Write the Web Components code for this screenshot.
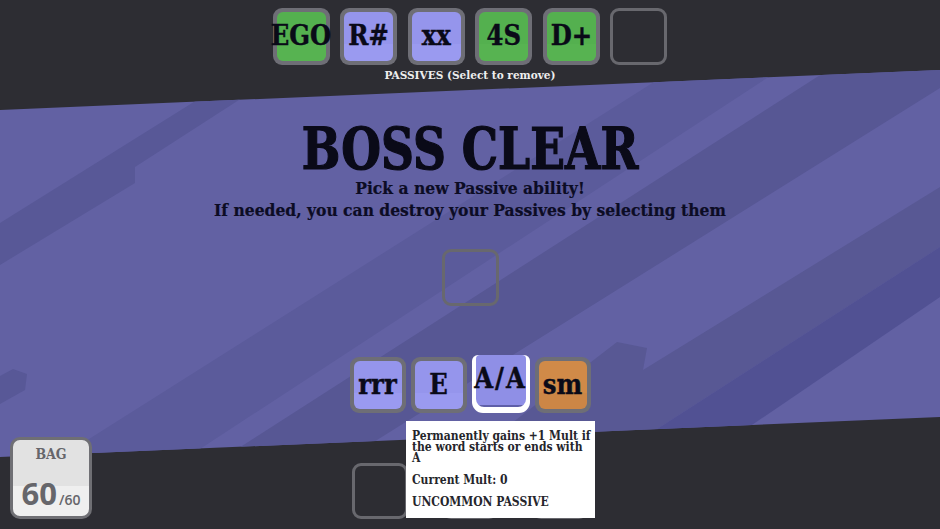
<!DOCTYPE html>
<html>
<head>
<meta charset="utf-8">
<style>
html,body{margin:0;padding:0;background:#2d2d33;overflow:hidden}
</style>
</head>
<body>
<boss-screen></boss-screen>
<script>
const tileTemplate=document.createElement('template');
tileTemplate.innerHTML=`
<style>
:host{
  display:block;width:var(--tile,57px);height:var(--tile,57px);box-sizing:border-box;border-radius:9px;
  background:var(--edge,#6e6e76);padding:4px;
  font:700 27px/1 "DejaVu Serif Condensed","DejaVu Serif",serif;color:#0a0a18;
  -webkit-text-stroke:.4px currentColor;
}
.face{
  height:100%;border-radius:6px;display:flex;align-items:center;justify-content:center;
  box-sizing:border-box;padding-bottom:2px;white-space:nowrap;
  background:linear-gradient(var(--top,#9595ec) 66%,var(--bottom,#9a9af0) 66%);
}
:host([kind=green]){--top:#54b04f;--bottom:#57b351}
:host([kind=orange]){--top:#d08a48;--bottom:#cc8646}
:host([kind=empty]){background:transparent;border:3px solid #68686e;padding:0}
:host([kind=empty]) .face{background:none}
:host([picked]){
  width:58px;height:58px;margin-top:-2px;background:#fff;padding:0 4px 6px;
  border-radius:6px 6px 11px 11px;letter-spacing:2px;
}
:host([picked]) .face{
  padding:0 0 6px;background:linear-gradient(#8f8fe6 96%,#5f5fa8 96%);border-radius:4px 4px 8px 8px;
}
</style>
<div class="face"><slot></slot></div>`;
class GameTile extends HTMLElement{
  constructor(){
    super();
    this.attachShadow({mode:'open'}).appendChild(tileTemplate.content.cloneNode(true));
  }
}
customElements.define('game-tile',GameTile);

const tipTemplate=document.createElement('template');
tipTemplate.innerHTML=`
<style>
:host{
  position:absolute;left:406px;top:421px;width:189px;height:97px;box-sizing:border-box;
  background:#fff;color:#25252b;padding:10px 3px 0 6px;
  font:700 12px/11px "DejaVu Serif Condensed","DejaVu Serif",serif;
}
p{margin:0 0 11px}
</style>
<p>Permanently gains +1 Mult if the word starts or ends with A</p>
<p>Current Mult: 0</p>
<p>UNCOMMON PASSIVE</p>`;
class TipBox extends HTMLElement{
  constructor(){
    super();
    this.attachShadow({mode:'open'}).appendChild(tipTemplate.content.cloneNode(true));
  }
}
customElements.define('tip-box',TipBox);

const bagTemplate=document.createElement('template');
bagTemplate.innerHTML=`
<style>
:host{
  position:absolute;left:10px;top:437px;width:82px;height:82px;box-sizing:border-box;
  border:3px solid #6f6f74;border-radius:10px;
  background:linear-gradient(#e2e2e2 60%,#efefef 60%);color:#66666b;
  font-family:"Open Sans","Noto Sans",sans-serif;font-weight:700;text-align:center;
}
.name{font:700 14px/1 "DejaVu Serif Condensed","DejaVu Serif",serif;margin-top:7px}
.count{font-size:31px;line-height:1;margin-top:17px;white-space:nowrap}
small{font-size:14px;font-weight:600;margin-left:2px}
</style>
<div class="name">BAG</div>
<div class="count">60<small>/60</small></div>`;
class BagCounter extends HTMLElement{
  constructor(){
    super();
    this.attachShadow({mode:'open'}).appendChild(bagTemplate.content.cloneNode(true));
  }
}
customElements.define('bag-counter',BagCounter);

const screenTemplate=document.createElement('template');
screenTemplate.innerHTML=`
<style>
:host{
  display:flex;flex-direction:column;align-items:center;position:relative;
  width:940px;height:529px;overflow:hidden;background:#2d2d33;
  font-family:"DejaVu Serif Condensed","DejaVu Serif",serif;font-weight:700;color:#0c0c24;
}
svg.bg{position:absolute;left:0;top:0}
.row{display:flex;position:relative}
.passives{gap:10.6px;margin-top:8px}
.label{position:relative;color:#eee;font-size:11.7px;line-height:14px;margin-top:3px}
h1{
  position:relative;margin:41px 0 0;font-size:57px;line-height:52px;color:#0a0a18;font-weight:700;
  white-space:nowrap;transform:scaleX(.89);-webkit-text-stroke:1.2px currentColor;
}
.sub{position:relative;text-align:center;font-size:17.3px;line-height:22px;margin-top:2px;-webkit-text-stroke:.2px currentColor}
.pick{position:relative;margin-top:28px}
.choices{gap:5px;margin-top:51px;--tile:56px}
.slots{gap:34px;margin-top:50px;--tile:56px}
</style>
<svg class="bg" width="940" height="529" viewBox="0 0 940 529">
  <defs><clipPath id="band"><polygon points="0,110 940,70 940,417 0,457"/></clipPath></defs>
  <polygon points="0,110 940,70 940,417 0,457" fill="#6261a3"/>
  <g clip-path="url(#band)">
    <polygon points="197,100 242,98 135,167 135,183 0,265 0,223" fill="#585897"/>
    <polygon points="0,376 13,369 27,374 25,390 0,404" fill="#585897"/>
    <polygon points="654,82 773,74 200,449 200,470 40,470" fill="#5b5b9b"/>
    <polygon points="817,77 830,70 940,60 940,88 377,440 360,460 220,460" fill="#575794"/>
    <polygon points="940,187 643,370 647,348 617,342 490,440 640,440 940,247" fill="#585894"/>
    <polygon points="940,247 640,440 730,440 940,297" fill="#515193"/>
  </g>
</svg>
<div class="row passives">
  <game-tile kind="green">EGO</game-tile>
  <game-tile>R#</game-tile>
  <game-tile>xx</game-tile>
  <game-tile kind="green">4S</game-tile>
  <game-tile kind="green">D+</game-tile>
  <game-tile kind="empty"></game-tile>
</div>
<div class="label">PASSIVES (Select to remove)</div>
<h1>BOSS CLEAR</h1>
<div class="sub">Pick a new Passive ability!<br>If needed, you can destroy your Passives by selecting them</div>
<game-tile class="pick" kind="empty"></game-tile>
<div class="row choices">
  <game-tile>rrr</game-tile>
  <game-tile>E</game-tile>
  <game-tile picked>A/A</game-tile>
  <game-tile kind="orange">sm</game-tile>
</div>
<div class="row slots">
  <game-tile kind="empty"></game-tile>
  <game-tile kind="empty"></game-tile>
  <game-tile kind="empty"></game-tile>
</div>
<tip-box></tip-box>
<bag-counter></bag-counter>`;
class BossScreen extends HTMLElement{
  constructor(){
    super();
    this.attachShadow({mode:'open'}).appendChild(screenTemplate.content.cloneNode(true));
  }
}
customElements.define('boss-screen',BossScreen);
</script>
</body>
</html>
